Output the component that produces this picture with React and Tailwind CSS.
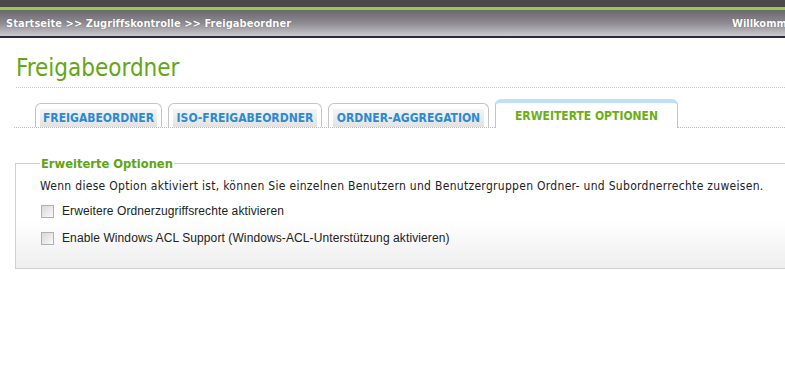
export default function App() {
  const tahoma = { fontFamily: '"DejaVu Sans Condensed", "Liberation Sans", sans-serif' }
  return (
    <div className="w-[785px] h-[369px] overflow-hidden bg-white">
      {/* header */}
      <div className="h-[7px] bg-[#4a4849]" />
      <div className="h-[3px] bg-[#99c94a]" />
      <div className="relative h-[26px] bg-gradient-to-b from-[#6a676e] via-[#8d8a91] to-[#cbc9ce] overflow-hidden whitespace-nowrap">
        <div style={tahoma} className="absolute left-[6px] top-[6px] text-[11px] font-bold text-white tracking-[0.05px] [text-shadow:0_0_1px_#555]">
          Startseite &gt;&gt; Zugriffskontrolle &gt;&gt; Freigabeordner
        </div>
        <div style={tahoma} className="absolute left-[732px] top-[6px] text-[11px] font-bold text-white [text-shadow:0_0_1px_#555]">
          Willkommen admin
        </div>
      </div>
      <div className="h-[2px] bg-[#2a2b3c]" />

      {/* title */}
      <div className="pl-4 pt-[16px]">
        <div style={tahoma} className="text-[24px] leading-[28px] text-[#63a618]">Freigabeordner</div>
        <div className="mt-[5px] border-t border-dotted border-[#c8c8c8]" />
      </div>

      {/* tabs */}
      <div className="mt-[11px] ml-[14px] flex items-end border-b border-dotted border-[#b8b8b8] h-[29px]">
        <div className="w-[21px]" />
        <Tab label="FREIGABEORDNER" w="w-[127px]" />
        <Tab label="ISO-FREIGABEORDNER" w="w-[154px]" />
        <Tab label="ORDNER-AGGREGATION" w="w-[161px]" />
        <div style={tahoma} className="w-[183px] h-[29px] -mb-px bg-white rounded-t-[6px] border-x border-[#c4c4c4] border-t-[4px] border-t-[#bfe0f8] flex items-center justify-center text-[12px] font-bold text-[#6cae13] whitespace-nowrap">
          ERWEITERTE OPTIONEN
        </div>
      </div>

      {/* fieldset */}
      <fieldset className="mt-[28px] ml-[15px] w-[800px] h-[113px] border border-[#d0d0d0] bg-gradient-to-b from-white from-55% to-[#eeeeee] pl-[24px] pr-0">
        <legend style={tahoma} className="px-[1px] text-[12.8px] font-bold text-[#5ea414] leading-[15px]">Erweiterte Optionen</legend>
        <div style={tahoma} className="mt-[8px] text-[12px] tracking-[0.3px] text-[#222] leading-[15px] whitespace-nowrap">
          Wenn diese Option aktiviert ist, können Sie einzelnen Benutzern und Benutzergruppen Ordner- und Subordnerrechte zuweisen.
        </div>
        <Check label="Erweitere Ordnerzugriffsrechte aktivieren" mt="mt-[10px]" />
        <Check label="Enable Windows ACL Support (Windows-ACL-Unterstützung aktivieren)" mt="mt-[13px]" />
      </fieldset>
    </div>
  )
}

function Tab({ label, w }) {
  return (
    <div className={`${w} mr-[6px] h-[24px] rounded-t-[6px] border-x border-t border-[#c4c4c4] bg-white px-[4px] pt-[5px]`}>
      <div
        style={{ fontFamily: '"DejaVu Sans Condensed", "Liberation Sans", sans-serif' }}
        className="h-full bg-gradient-to-b from-[#f4f4f4] to-[#e2e2e2] flex items-center justify-center text-[12px] font-bold text-[#2a8bd3] whitespace-nowrap"
      >
        {label}
      </div>
    </div>
  )
}

function Check({ label, mt }) {
  return (
    <div className={`${mt} flex items-center`}>
      <div className="ml-px w-[13px] h-[13px] border border-[#b0b0b0] bg-gradient-to-br from-[#d8d8d8] to-[#fafafa]" />
      <span className="ml-[8px] text-[12px] leading-[14px] tracking-[0.1px] text-[#222]" style={{ fontFamily: '"Liberation Sans", Arial, sans-serif' }}>{label}</span>
    </div>
  )
}
